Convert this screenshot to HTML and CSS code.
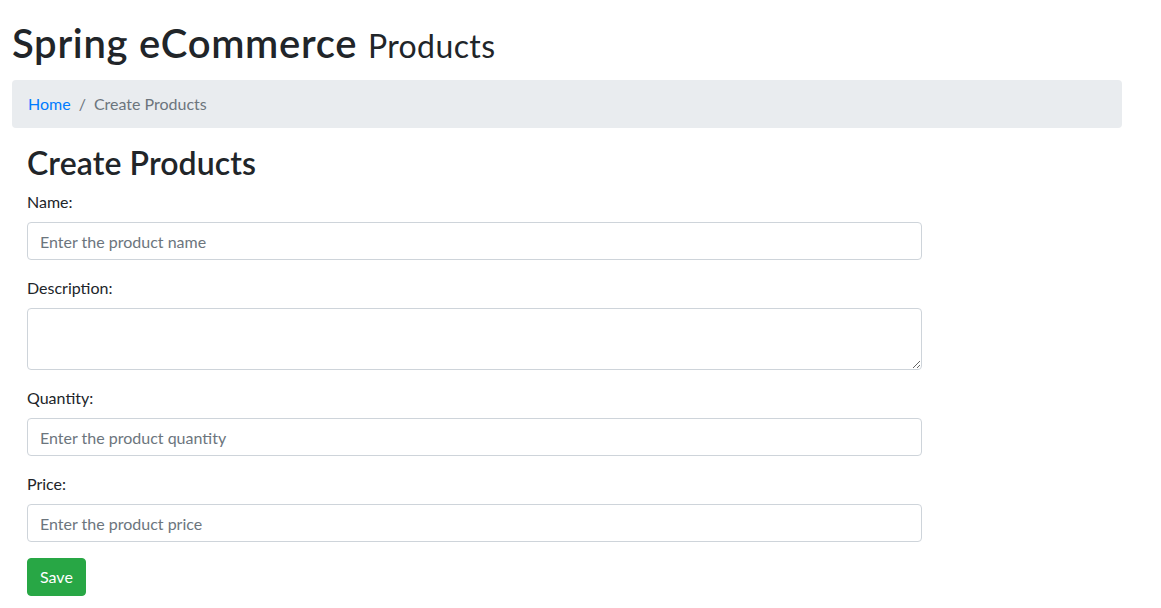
FILE: index.html
```html
<!DOCTYPE html>
<html lang="en">
<head>
<meta charset="utf-8">
<title>Create Products</title>
<link rel="stylesheet" href="styles.css">
</head>
<body>
<div class="container">
  <h1 class="title">Spring eCommerce <small class="title-sub">Products</small></h1>
  <nav class="breadcrumb">
    <a class="crumb-link" href="#">Home</a>
    <span class="crumb-sep">/</span>
    <span class="crumb-active">Create Products</span>
  </nav>
  <div class="inner">
    <h2 class="page-heading">Create Products</h2>
    <div class="row">
      <form class="col">
        <div class="form-group">
          <label class="label" for="name">Name:</label>
          <input class="form-control" id="name" type="text" placeholder="Enter the product name">
        </div>
        <div class="form-group">
          <label class="label" for="desc">Description:</label>
          <textarea class="form-control textarea" id="desc" rows="2"></textarea>
        </div>
        <div class="form-group">
          <label class="label" for="qty">Quantity:</label>
          <input class="form-control" id="qty" type="text" placeholder="Enter the product quantity">
        </div>
        <div class="form-group">
          <label class="label" for="price">Price:</label>
          <input class="form-control" id="price" type="text" placeholder="Enter the product price">
        </div>
        <button class="btn-save" type="button">Save</button>
      </form>
    </div>
  </div>
</div>
</body>
</html>
```
FILE: styles.css
```css
* { box-sizing: border-box; }
html, body { margin: 0; padding: 0; background: #fff; }
body {
  font-family: Lato, "Liberation Sans", sans-serif;
  font-size: 16px;
  line-height: 1.5;
  color: #212529;
}
.container {
  width: 1110px;
  margin-left: 12px;
  padding-top: 19px;
}
.title {
  margin: 0 0 10px 0;
  font-size: 40px;
  font-weight: 600;
  line-height: 48px;
  letter-spacing: 0.7px;
}
.title-sub {
  font-size: 32px;
  font-weight: 400;
  letter-spacing: 0.4px;
}
.breadcrumb {
  display: flex;
  align-items: center;
  height: 48px;
  padding: 12px 16px;
  margin-bottom: 16px;
  background: #e9ecef;
  border-radius: 4px;
}
.crumb-link { color: #007bff; text-decoration: none; }
.crumb-sep { color: #6c757d; padding: 0 8px; }
.crumb-active { color: #6c757d; }
.inner { padding: 0 15px; }
.page-heading {
  margin: 0 0 8px 0;
  font-size: 32px;
  font-weight: 600;
  line-height: 38px;
  letter-spacing: 0.1px;
}
.row { display: flex; margin: 0 -15px; }
.col { width: 925px; padding: 0 15px; }
.form-group { margin-bottom: 16px; }
.label { display: inline-block; margin-bottom: 8px; }
.form-control {
  display: block;
  width: 100%;
  height: 38px;
  padding: 6px 12px;
  font-family: inherit;
  font-size: 16px;
  line-height: 24px;
  color: #495057;
  background: #fff;
  border: 1px solid #ced4da;
  border-radius: 4px;
  outline: none;
}
.form-control::placeholder { color: #6c757d; opacity: 1; }
.textarea { height: 62px; resize: vertical; }
.btn-save {
  display: inline-block;
  height: 38px;
  padding: 6px 12px;
  font-family: inherit;
  font-size: 16px;
  line-height: 24px;
  color: #fff;
  background: #28a745;
  border: 1px solid #28a745;
  border-radius: 4px;
}
```
